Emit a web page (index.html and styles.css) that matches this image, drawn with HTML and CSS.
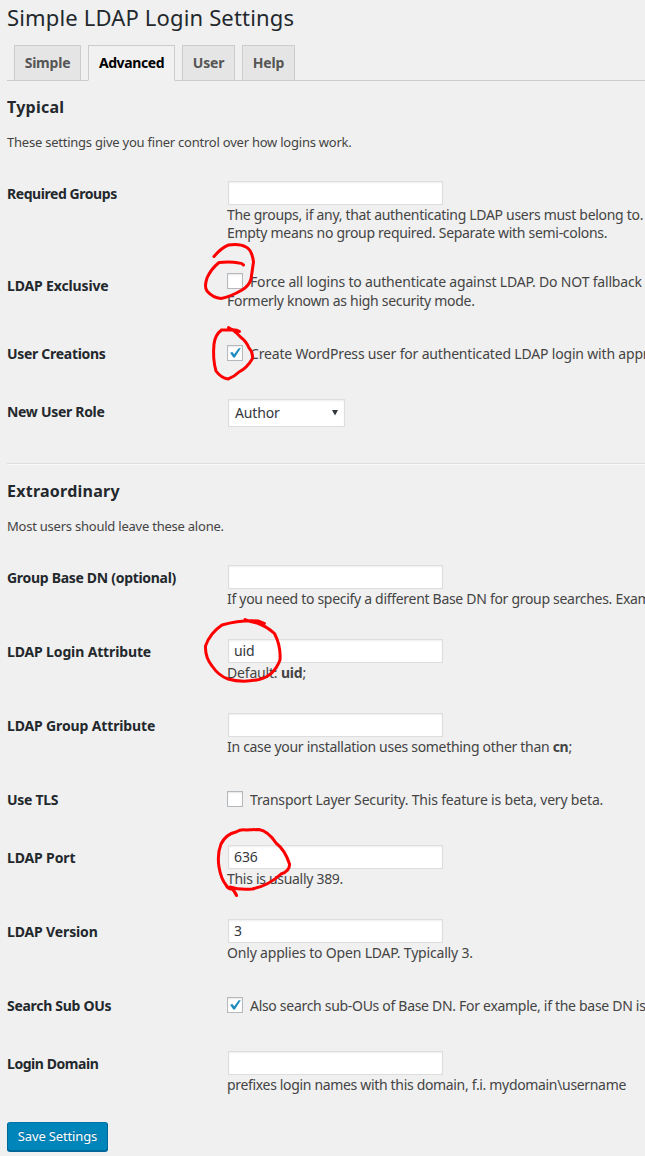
FILE: index.html
```html
<!DOCTYPE html>
<html lang="en">
<head>
<meta charset="utf-8">
<title>Simple LDAP Login Settings</title>
<link rel="stylesheet" href="styles.css">
</head>
<body>
<main class="wrap">
  <h1 class="title">Simple LDAP Login Settings</h1>
  <nav class="tabs">
    <a class="tab tab-simple">Simple</a>
    <a class="tab tab-advanced active">Advanced</a>
    <a class="tab tab-user">User</a>
    <a class="tab tab-help">Help</a>
  </nav>

  <section class="section">
    <h3 class="heading">Typical</h3>
    <p class="intro">These settings give you finer control over how logins work.</p>
    <div class="row tall">
      <div class="label tight">Required Groups</div>
      <div class="field"><div class="input"></div><p>The groups, if any, that authenticating LDAP users must belong to.</p><p>Empty means no group required. Separate with semi-colons.</p></div>
    </div>
    <div class="row check-two">
      <div class="label loose">LDAP Exclusive</div>
      <div class="field"><div class="check wide"><span class="box"></span><span>Force all logins to authenticate against LDAP. Do NOT fallback</span></div><p>Formerly known as high security mode.</p></div>
    </div>
    <div class="row single">
      <div class="label">User Creations</div>
      <div class="field"><div class="check wide"><span class="box"><svg class="tick" viewBox="0 0 14 14"><path d="M2 6.8 4.4 5.9 6.2 8.2 10.6 2.2 12.8 2.2 6.9 11.5 5.3 11.5Z"/></svg></span><span>Create WordPress user for authenticated LDAP login with appr</span></div></div>
    </div>
    <div class="row single choice">
      <div class="label">New User Role</div>
      <div class="field"><div class="select"><span>Author</span><svg class="arrow" viewBox="0 0 7 7"><path d="M0 0H7L3.5 6.5Z"/></svg></div></div>
    </div>
  </section>

  <hr class="rule">

  <section class="section second">
    <h3 class="heading">Extraordinary</h3>
    <p class="intro">Most users should leave these alone.</p>
    <div class="row">
      <div class="label">Group Base DN (optional)</div>
      <div class="field"><div class="input"></div><p>If you need to specify a different Base DN for group searches. Exam</p></div>
    </div>
    <div class="row">
      <div class="label loose">LDAP Login Attribute</div>
      <div class="field"><div class="input">uid</div><p class="wide">Default: <b>uid</b>;</p></div>
    </div>
    <div class="row">
      <div class="label loose">LDAP Group Attribute</div>
      <div class="field"><div class="input"></div><p>In case your installation uses something other than <b>cn</b>;</p></div>
    </div>
    <div class="row single">
      <div class="label">Use TLS</div>
      <div class="field"><div class="check wide"><span class="box"></span><span>Transport Layer Security. This feature is beta, very beta.</span></div></div>
    </div>
    <div class="row">
      <div class="label loose">LDAP Port</div>
      <div class="field"><div class="input">636</div><p>This is usually 389.</p></div>
    </div>
    <div class="row">
      <div class="label loose">LDAP Version</div>
      <div class="field"><div class="input">3</div><p class="wide">Only applies to Open LDAP. Typically 3.</p></div>
    </div>
    <div class="row single">
      <div class="label">Search Sub OUs</div>
      <div class="field"><div class="check"><span class="box"><svg class="tick" viewBox="0 0 14 14"><path d="M2 6.8 4.4 5.9 6.2 8.2 10.6 2.2 12.8 2.2 6.9 11.5 5.3 11.5Z"/></svg></span><span>Also search sub-OUs of Base DN. For example, if the base DN is</span></div></div>
    </div>
    <div class="row">
      <div class="label tight">Login Domain</div>
      <div class="field"><div class="input"></div><p class="narrow">prefixes login names with this domain, f.i. mydomain\username</p></div>
    </div>
  </section>
  <button class="save" type="button">Save Settings</button>

  <svg class="marks" viewBox="0 0 645 1156">
    <path d="M214 256.500Q221 248 228.500 245Q240 243.500 246 247Q252 250 253.500 262Q252 272 251 279Q249 286 242 290Q230 297 221 298.500Q213 298 207 291Q204 287 207 278Q211 269 219 262.500Q231 261.500 239 263Q242 263 243.500 265"/>
    <path d="M239.500 331.500Q236 329 229 330L221.500 330Q215 335 214 344Q212.500 359 216 371Q221 378 228 379Q234 377 239 372Q247 368 252.500 358.500Q253 352 249 348Q246 341 241 337.500Q234 330 228.500 327.500"/>
    <path d="M264.500 623.500L257.500 623Q250 622 245 619.500M264 623.500L258 621Q240 620 222 625Q210 633 205.500 646Q205 657 212 666Q219 676 228 679Q242 683 259 679.500Q274 676 280 660Q281 646 274.500 633.500Q266 626 257 623"/>
    <path d="M236.500 895.500Q235 891 230 887Q239 890 252 889Q268 886 281 874Q290 871 289.500 864Q285 850 276 843Q268 831 259 829.500L246 830Q241 829 236 832Q226 834 221 844Q217 854 219 867Q221 879 226 885Q228 889 231 889"/>
  </svg>
</main>
</body>
</html>
```
FILE: styles.css
```css
* { box-sizing: border-box; }
body { margin: 0; background: #f0f0f0; color: #444; font-family: "Noto Sans", sans-serif; font-size: 14px; }
.wrap { position: relative; width: 645px; height: 1156px; overflow: hidden; display: flex; flex-direction: column; align-items: stretch; }
.title { margin: 3px 0 0 7px; height: 42px; font-size: 22px; line-height: 29px; font-weight: 400; color: #23282d; white-space: nowrap; letter-spacing: .16px; }
.tabs { display: flex; gap: 7px; margin-left: 7px; padding-left: 7px; height: 36px; border-bottom: 1px solid #ccc; flex: none; }
.tab { height: 36px; border: 1px solid #ccc; background: #e5e5e5; color: #555; font-weight: 700; font-size: 14px; line-height: 34px; text-align: center; white-space: nowrap; letter-spacing: -.2px; }
.tab-simple { width: 67px; }
.tab-advanced { width: 87px; letter-spacing: -.4px; }
.tab-user { width: 53px; }
.tab-help { width: 53px; }
.active { background: #f1f1f1; border-bottom-color: #f1f1f1; color: #000; }
.section { padding: 16px 0 0 7px; height: 360px; flex: none; }
.heading { margin: 0; font-size: 16px; line-height: 21px; color: #23282d; letter-spacing: .25px; }
.intro { margin: 15px 0 0; height: 32px; font-size: 13px; line-height: 18px; white-space: nowrap; letter-spacing: -.23px; }
.row { display: grid; grid-template-columns: 220px 1fr; height: 74px; }
.tall { height: 92px; }
.check-two { height: 68px; }
.single { height: 58px; }
.label { padding-top: 20px; font-weight: 700; line-height: 18px; color: #23282d; white-space: nowrap; letter-spacing: -.3px; }
.loose { letter-spacing: -.14px; }
.tight { letter-spacing: -.44px; }
.field { padding-top: 16px; min-width: 0; white-space: nowrap; letter-spacing: -.3px; }
.single .field { padding-top: 20px; }
.choice .field { padding-top: 16px; }
.field p { margin: 0; line-height: 18px; }
.field .wide { letter-spacing: -.18px; }
.field .narrow { letter-spacing: -.33px; }
.input { width: 215px; height: 24px; margin: 0 0 1px 1px; padding-left: 5px; border: 1px solid #ddd; background: #fff; box-shadow: inset 0 1px 2px rgba(0,0,0,.07); color: #32373c; line-height: 22px; letter-spacing: -.1px; }
.check { display: flex; gap: 7px; height: 19px; line-height: 17px; }
.box { width: 16px; height: 16px; flex: none; border: 1px solid #b4b9be; background: #fff; box-shadow: inset 0 1px 2px rgba(0,0,0,.1); }
.tick { display: block; width: 14px; height: 14px; fill: #1e8cbe; }
.select { display: flex; align-items: center; justify-content: space-between; width: 117px; height: 28px; margin-left: 1px; padding: 0 6px 2px; border: 1px solid #ddd; background: #fff; box-shadow: inset 0 1px 2px rgba(0,0,0,.07); color: #32373c; letter-spacing: -.15px; }
.arrow { width: 6px; height: 6px; margin-top: 1px; fill: #32373c; }
.rule { width: 638px; height: 2px; margin: 22px 0 0 7px; border: 0; border-top: 1px solid #ddd; border-bottom: 1px solid #fafafa; flex: none; }
.second { height: 644px; }
.save { margin: 13px 0 0 7px; width: 101px; height: 29px; padding: 0 0 2px; border: 1px solid #006799; border-top-color: #0073aa; border-radius: 3px; background: #0085ba; box-shadow: 0 1px 0 #006799; color: #fff; font: 13px "Noto Sans", sans-serif; letter-spacing: -.15px; text-shadow: 0 -1px 1px #006799; white-space: nowrap; flex: none; }
.marks { position: absolute; inset: 0; width: 645px; height: 1156px; fill: none; stroke: #f00; stroke-width: 3; stroke-linecap: round; stroke-linejoin: round; pointer-events: none; }
```
